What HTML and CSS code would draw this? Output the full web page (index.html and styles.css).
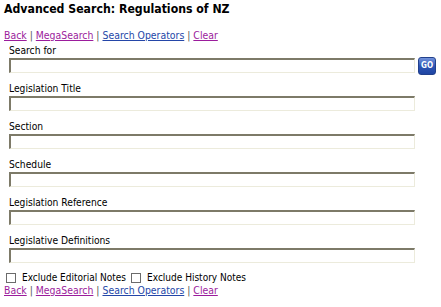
FILE: index.html
```html
<!DOCTYPE html>
<html>
<head>
<meta charset="utf-8">
<link rel="stylesheet" href="styles.css">
</head>
<body>
<h1 class="title">Advanced Search: Regulations of NZ</h1>
<div class="links">
  <a class="visited" href="#">Back</a> | <a class="visited" href="#">MegaSearch</a> | <a class="fresh" href="#">Search Operators</a> | <a class="visited" href="#">Clear</a>
</div>
<form class="form">
  <div class="field">
    <label class="label">Search for</label>
    <div class="row">
      <input class="box" type="text">
      <button class="go" type="button">GO</button>
    </div>
  </div>
  <div class="field">
    <label class="label">Legislation Title</label>
    <div class="row"><input class="box" type="text"></div>
  </div>
  <div class="field">
    <label class="label">Section</label>
    <div class="row"><input class="box" type="text"></div>
  </div>
  <div class="field">
    <label class="label">Schedule</label>
    <div class="row"><input class="box" type="text"></div>
  </div>
  <div class="field">
    <label class="label">Legislation Reference</label>
    <div class="row"><input class="box" type="text"></div>
  </div>
  <div class="field">
    <label class="label">Legislative Definitions</label>
    <div class="row"><input class="box" type="text"></div>
  </div>
</form>
<div class="checks">
  <span class="chk"></span><span class="chklabel">Exclude Editorial Notes</span>
  <span class="chk"></span><span class="chklabel">Exclude History Notes</span>
</div>
<div class="links bottom">
  <a class="visited" href="#">Back</a> | <a class="visited" href="#">MegaSearch</a> | <a class="fresh" href="#">Search Operators</a> | <a class="visited" href="#">Clear</a>
</div>
</body>
</html>
```
FILE: styles.css
```css
html, body {
  margin: 0;
  padding: 0;
  background: #ffffff;
}
body {
  padding: 0 4px;
  font-family: "DejaVu Sans Condensed", "DejaVu Sans", Verdana, sans-serif;
  font-size: 10px;
  color: #000;
}
.title {
  margin: 0;
  padding-top: 1px;
  font-size: 12.2px;
  font-weight: bold;
  line-height: 17px;
}
.links {
  margin-top: 11px;
  line-height: 13px;
  font-size: 10.4px;
  color: #555;
}
.links a {
  text-decoration: underline;
}
.links a.visited {
  color: #9b1c9c;
}
.links a.fresh {
  color: #2446a8;
}
.form {
  margin: 0;
  padding-left: 5px;
  display: flex;
  flex-direction: column;
  gap: 7px;
}
.field {
  display: flex;
  flex-direction: column;
}
.label {
  display: block;
  padding-top: 2px;
  line-height: 14px;
  font-size: 10.2px;
}
.row {
  display: flex;
  align-items: center;
  gap: 3px;
  height: 15px;
}
.box {
  box-sizing: border-box;
  width: 406px;
  height: 15px;
  margin: 0;
  padding: 0;
  border-style: solid;
  border-width: 2px 1px 1px 2px;
  border-color: #7d7a68 #ecebdc #ecebdc #7d7a68;
  background: #fff;
}
.go {
  box-sizing: border-box;
  width: 18px;
  height: 18px;
  margin: 0;
  padding: 0;
  border: 1px solid #22408c;
  border-radius: 3px;
  background: linear-gradient(#7393dc, #2d55b5 50%, #1f45a3);
  color: #fff;
  font-family: "DejaVu Sans Condensed", "DejaVu Sans", sans-serif;
  font-size: 8px;
  font-weight: bold;
  line-height: 16px;
}
.checks {
  display: flex;
  align-items: center;
  margin-top: 8px;
  padding-left: 2px;
  line-height: 13px;
  font-size: 10px;
}
.chk {
  box-sizing: border-box;
  width: 10px;
  height: 10px;
  border: 1px solid #6b6b6b;
  background: #fff;
  margin-right: 6px;
}
.chklabel {
  margin-right: 5px;
}
.bottom {
  margin-top: 0;
}
```
